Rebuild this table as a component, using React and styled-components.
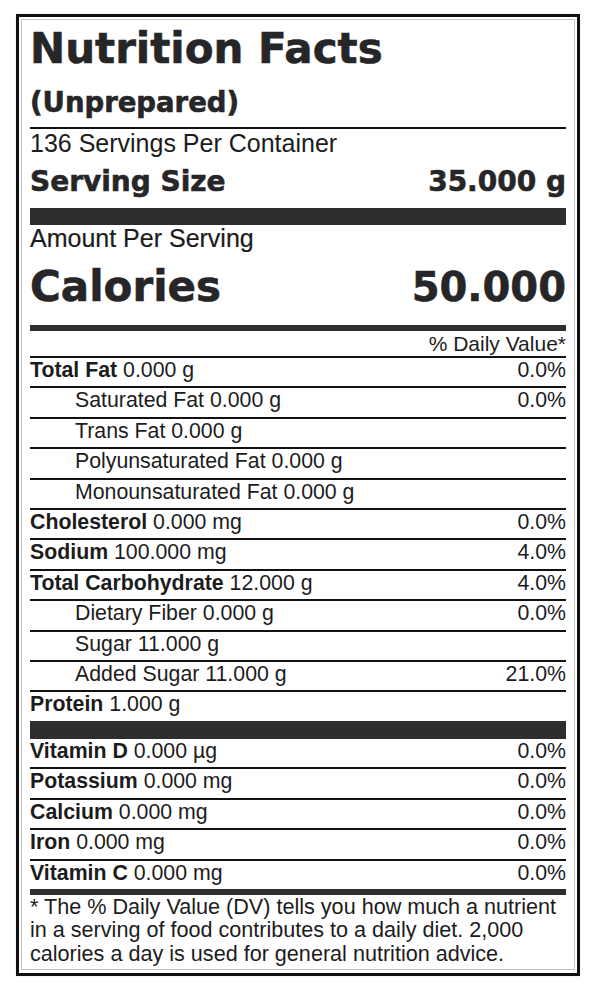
import React from 'react';
import styled, { createGlobalStyle, css } from 'styled-components';

const ink = '#1c1c1c';
const bar = '#2e2e2e';
const heavy = '"DejaVu Sans", "Liberation Sans", Arial, sans-serif';

const GlobalStyle = createGlobalStyle`
  body {
    margin: 0;
    background: #fff;
    color: ${ink};
    font-family: "Liberation Sans", Arial, sans-serif;
  }
`;

const Page = styled.div`
  padding: 14px 0 16px 16px;
`;

const Label = styled.section`
  width: 564px;
  box-sizing: border-box;
  border: 3px solid #111;
  padding: 2px 2px 3px;
  box-shadow: 0 0 2px rgba(0, 0, 0, 0.12);
`;

const Inner = styled.div`
  border: 1px solid #c4c4c4;
  padding: 6px 8px 4px;
`;

const Header = styled.header`
  padding-bottom: 8px;
  border-bottom: 2px solid #111;
`;

const HeavyText = css`
  font-family: ${heavy};
  font-weight: 700;
  color: #262628;
  -webkit-text-stroke: 0.6px #262628;
`;

const Title = styled.h1`
  ${HeavyText};
  margin: 0;
  font-size: 42px;
  line-height: 46px;
`;

const Subtitle = styled.div`
  ${HeavyText};
  margin-top: 13px;
  font-size: 27.5px;
  line-height: 34px;
`;

const Servings = styled.div`
  font-size: 25px;
  line-height: 28px;
`;

const SizeRow = styled.div`
  ${HeavyText};
  display: flex;
  justify-content: space-between;
  align-items: baseline;
  padding: 9px 0 10px;
  font-size: 28px;
  line-height: 32px;
`;

const Bar = styled.div`
  height: ${p => p.$h}px;
  background: ${bar};
`;

const Amount = styled.div`
  font-size: 25px;
  line-height: 26px;
  -webkit-text-stroke: 0.2px ${ink};
`;

const CaloriesRow = styled.div`
  ${HeavyText};
  display: flex;
  justify-content: space-between;
  align-items: baseline;
  padding: 13px 0 15px;
  border-bottom: 6px solid ${bar};
  line-height: 46px;
`;

const CaloriesLabel = styled.span`
  font-size: 42px;
`;

const CaloriesValue = styled.span`
  font-size: 40px;
`;

const DvHead = styled.div`
  text-align: right;
  font-size: 21px;
  line-height: 25px;
  border-bottom: 2px solid #111;
`;

const Row = styled.div`
  display: flex;
  justify-content: space-between;
  align-items: baseline;
  font-size: 21.3px;
  line-height: 25.4px;
  padding-bottom: 3px;
  padding-left: ${p => (p.$sub ? 45 : 0)}px;
  ${p =>
    !p.$last &&
    css`
      border-bottom: 2px solid #111;
    `}
`;

const Name = styled.span`
  b {
    font-weight: 700;
  }
`;

const Footnote = styled.p`
  margin: 0;
  font-size: 21.6px;
  line-height: 23.5px;
`;

const nutrients = [
  { name: 'Total Fat', amount: '0.000 g', dv: '0.0%' },
  { name: 'Saturated Fat', amount: '0.000 g', dv: '0.0%', sub: true },
  { name: 'Trans Fat', amount: '0.000 g', sub: true },
  { name: 'Polyunsaturated Fat', amount: '0.000 g', sub: true },
  { name: 'Monounsaturated Fat', amount: '0.000 g', sub: true },
  { name: 'Cholesterol', amount: '0.000 mg', dv: '0.0%' },
  { name: 'Sodium', amount: '100.000 mg', dv: '4.0%' },
  { name: 'Total Carbohydrate', amount: '12.000 g', dv: '4.0%' },
  { name: 'Dietary Fiber', amount: '0.000 g', dv: '0.0%', sub: true },
  { name: 'Sugar', amount: '11.000 g', sub: true },
  { name: 'Added Sugar', amount: '11.000 g', dv: '21.0%', sub: true },
  { name: 'Protein', amount: '1.000 g', last: true },
];

const vitamins = [
  { name: 'Vitamin D', amount: '0.000 µg', dv: '0.0%' },
  { name: 'Potassium', amount: '0.000 mg', dv: '0.0%' },
  { name: 'Calcium', amount: '0.000 mg', dv: '0.0%' },
  { name: 'Iron', amount: '0.000 mg', dv: '0.0%' },
  { name: 'Vitamin C', amount: '0.000 mg', dv: '0.0%', last: true },
];

function NutrientRow({ name, amount, dv, sub, last }) {
  return (
    <Row $sub={sub} $last={last}>
      <Name>
        {sub ? name : <b>{name}</b>} {amount}
      </Name>
      {dv && <span>{dv}</span>}
    </Row>
  );
}

export default function App() {
  return (
    <Page>
      <GlobalStyle />
      <Label>
        <Inner>
          <Header>
            <Title>Nutrition Facts</Title>
            <Subtitle>(Unprepared)</Subtitle>
          </Header>
          <Servings>136 Servings Per Container</Servings>
          <SizeRow>
            <span>Serving Size</span>
            <span>35.000 g</span>
          </SizeRow>
          <Bar $h={17} />
          <Amount>Amount Per Serving</Amount>
          <CaloriesRow>
            <CaloriesLabel>Calories</CaloriesLabel>
            <CaloriesValue>50.000</CaloriesValue>
          </CaloriesRow>
          <DvHead>% Daily Value*</DvHead>
          {nutrients.map(n => (
            <NutrientRow key={n.name} {...n} />
          ))}
          <Bar $h={18} />
          {vitamins.map(n => (
            <NutrientRow key={n.name} {...n} />
          ))}
          <Bar $h={6} />
          <Footnote>
            * The % Daily Value (DV) tells you how much a nutrient in a serving of food
            contributes to a daily diet. 2,000 calories a day is used for general nutrition
            advice.
          </Footnote>
        </Inner>
      </Label>
    </Page>
  );
}
